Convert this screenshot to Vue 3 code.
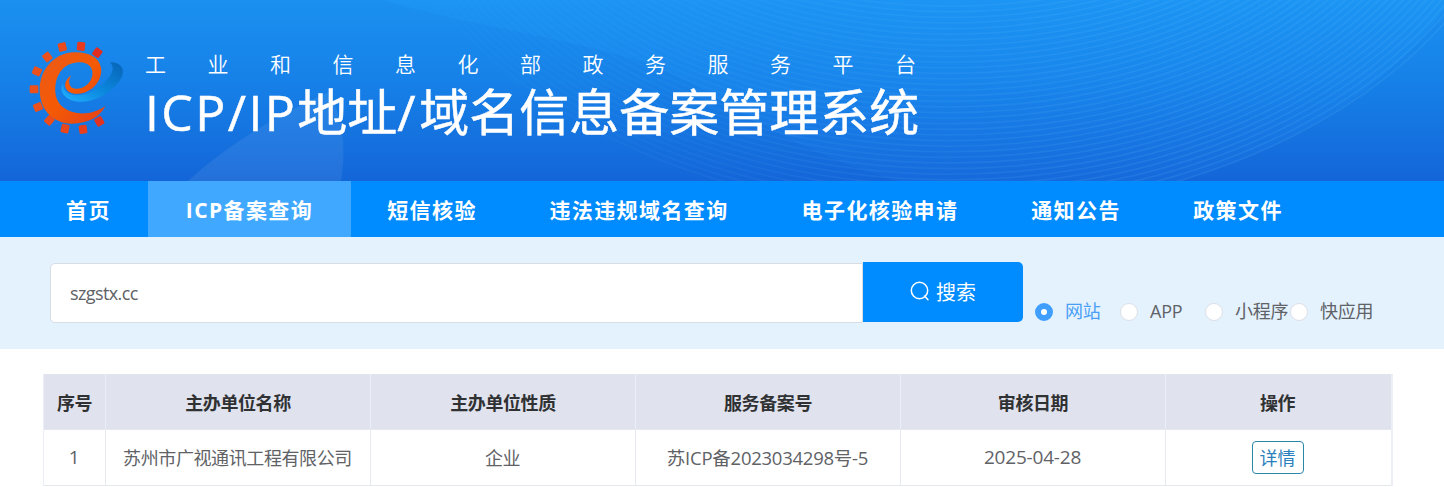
<template>
  <div class="page">
    <header class="banner">
      <svg class="banner-bg" viewBox="0 0 1444 181" preserveAspectRatio="none">
        <defs>
          <linearGradient id="fade" x1="400" y1="0" x2="1150" y2="0" gradientUnits="userSpaceOnUse">
            <stop offset="0" stop-color="#6cc4ff" stop-opacity="0.1" />
            <stop offset="1" stop-color="#6cc4ff" stop-opacity="1" />
          </linearGradient>
          <linearGradient id="glow" x1="0" y1="0" x2="0" y2="181" gradientUnits="userSpaceOnUse">
            <stop offset="0" stop-color="#1fa6ff" stop-opacity="0.22" />
            <stop offset="1" stop-color="#2a90ff" stop-opacity="0.08" />
          </linearGradient>
        </defs>
        <path d="M188 181 C226 146 270 119 329 92 C344 119 346 150 341 181 Z" fill="#fff" fill-opacity="0.07" />
        <path d="M383 0 C500 35 625 42 700 88 C757 125 819 158 898 181 H1178 C1303 145 1400 79 1450 0 Z" fill="url(#glow)" />
        <g fill="none" stroke="url(#fade)" stroke-opacity="0.13" stroke-width="1.6">
          <ellipse v-for="n in 38" :key="n" cx="950" cy="-190" :rx="588 - n * 6" :ry="409 - n * 5.6" />
        </g>
      </svg>

      <svg class="logo" viewBox="0 0 345 345">
        <defs>
          <linearGradient id="orange" x1="0" y1="0" x2="1" y2="1">
            <stop offset="0" stop-color="#ea5a1c" />
            <stop offset="0.5" stop-color="#f55a04" />
            <stop offset="1" stop-color="#e0401c" />
          </linearGradient>
          <linearGradient id="swoosh" x1="0" y1="1" x2="1" y2="0">
            <stop offset="0" stop-color="#20b0ff" />
            <stop offset="0.5" stop-color="#0a86dc" />
            <stop offset="1" stop-color="#0763b5" />
          </linearGradient>
        </defs>
        <path
          fill="url(#swoosh)"
          d="M270 97 C309 96 320 127 297 155 C267 193 224 215 180 215 C137 216 113 183 130 160 C128 180 143 196 170 196 C216 194 252 164 272 135 C281 119 280 108 270 97 Z"
        />
        <path
          fill="url(#orange)"
          d="M153 137 C125 154 130 193 174 191 C217 189 249 149 243 113 C237 77 197 64 158 67 C98 71 58 125 59 180 C60 241 99 280 155 281 C207 281 241 259 256 228 C226 249 190 256 157 246 C119 235 102 205 106 168 C110 126 137 99 174 97 C204 95 221 113 217 136 C213 161 190 178 166 176 C148 174 142 157 153 137 Z"
        />
        <rect
          v-for="(t, i) in teeth"
          :key="i"
          x="-12"
          y="-13"
          width="24"
          height="26"
          rx="4"
          :fill="t[3]"
          :transform="`translate(${t[0]} ${t[1]}) rotate(${t[2]})`"
        />
      </svg>

      <div class="titles">
        <p class="subtitle">工业和信息化部政务服务平台</p>
        <h1><span>ICP/IP</span>地址<span class="slash">/</span>域名信息备案管理系统</h1>
      </div>
    </header>

    <nav class="nav">
      <a
        v-for="(item, i) in menu"
        :key="item"
        class="nav-item"
        :class="{ active: activo === i }"
        @click="activo = i"
      >{{ item }}</a>
    </nav>

    <section class="search">
      <input v-model="keyword" type="text" class="search-input" />
      <button class="search-btn">
        <svg viewBox="0 0 20 20" width="20" height="20" fill="none" stroke="currentColor" stroke-width="1.5">
          <circle cx="9.5" cy="9.5" r="8.2" />
          <path d="M14.5 15 L18 18.7" stroke-linecap="round" />
        </svg>
        <span>搜索</span>
      </button>
      <div class="types">
        <label v-for="t in types" :key="t" class="type" :class="{ checked: type === t }" @click="type = t">
          <span class="dot"></span>
          <span>{{ t }}</span>
        </label>
      </div>
    </section>

    <table class="result">
      <colgroup>
        <col class="c-num" />
        <col class="c-main" />
        <col class="c-main" />
        <col class="c-main" />
        <col class="c-main" />
        <col />
      </colgroup>
      <thead>
        <tr>
          <th v-for="h in headers" :key="h">{{ h }}</th>
        </tr>
      </thead>
      <tbody>
        <tr v-for="(row, i) in rows" :key="row.licence">
          <td class="date">{{ i + 1 }}</td>
          <td>{{ row.name }}</td>
          <td>{{ row.kind }}</td>
          <td class="licence">{{ row.licence }}</td>
          <td class="date">{{ row.date }}</td>
          <td><button class="detail">详情</button></td>
        </tr>
      </tbody>
    </table>
  </div>
</template>

<script setup>
import { ref } from 'vue'

const menu = ['首页', 'ICP备案查询', '短信核验', '违法违规域名查询', '电子化核验申请', '通知公告', '政策文件']
const activo = ref(1)

const keyword = ref('szgstx.cc')
const types = ['网站', 'APP', '小程序', '快应用']
const type = ref('网站')

const headers = ['序号', '主办单位名称', '主办单位性质', '服务备案号', '审核日期', '操作']
const rows = ref([
  {
    name: '苏州市广视通讯工程有限公司',
    kind: '企业',
    licence: '苏ICP备2023034298号-5',
    date: '2025-04-28'
  }
])

// x, y, rotation, colour
const teeth = [
  [232, 68, 35, '#e02d22'],
  [183, 49, 6, '#e83a1c'],
  [127, 51, -14, '#ea4a1c'],
  [82, 81, -38, '#ec501c'],
  [51, 124, -65, '#ec501c'],
  [42, 178, -90, '#ec501c'],
  [54, 231, 68, '#ec501c'],
  [88, 271, 42, '#ec4c1c'],
  [135, 296, 12, '#ea461c'],
  [189, 298, -8, '#e83e1c'],
  [238, 274, -30, '#e23320']
]
</script>

<style>
body {
  background: #fff;
  overflow: hidden;
}
</style>

<style scoped>
.page {
  width: 1444px;
  height: 487px;
  overflow: hidden;
  font-family: "Open Sans", "Noto Sans CJK SC", sans-serif;
  color: #606266;
}

.banner {
  position: relative;
  display: flex;
  height: 181px;
  background: linear-gradient(#1b90f1, #1681e8 45%, #1466d8);
  overflow: hidden;
}

.banner-bg {
  position: absolute;
  left: 0;
  top: 0;
  width: 100%;
  height: 100%;
}

.logo {
  position: relative;
  width: 115px;
  height: 115px;
  margin: 30px 0 0 20px;
}

.titles {
  position: relative;
  margin: 48px 0 0 10px;
  color: #fff;
  white-space: nowrap;
}

.subtitle {
  margin: 0;
  font-family: "Noto Sans CJK SC", sans-serif;
  font-size: 21px;
  line-height: 30px;
  letter-spacing: 41.5px;
  font-weight: 350;
}

h1 {
  margin: 1px 0 0;
  font-size: 50px;
  line-height: 66px;
  font-weight: 400;
  -webkit-text-stroke: 0.5px #fff;
}

h1 span {
  letter-spacing: 2.4px;
}

h1 .slash {
  letter-spacing: 3.5px;
}

.nav {
  display: flex;
  height: 56px;
  padding-left: 29px;
  background: #008cff;
}

.nav-item {
  width: 162px;
  line-height: 58px;
  text-align: center;
  color: #fff;
  font-size: 21px;
  font-weight: 700;
  letter-spacing: 1.4px;
  white-space: nowrap;
  cursor: pointer;
}

.nav-item:nth-child(1) {
  width: 119px;
}

.nav-item:nth-child(2) {
  width: 203px;
}

.nav-item:nth-child(4) {
  width: 252px;
}

.nav-item:nth-child(5) {
  width: 230px;
}

.nav-item.active {
  background: #40a9ff;
}

.search {
  display: flex;
  height: 112px;
  box-sizing: border-box;
  padding: 25px 0 0 50px;
  background: #e4f2fe;
}

.search-input {
  width: 813px;
  height: 60px;
  margin-top: 1px;
  box-sizing: border-box;
  padding: 0 19px 1px;
  border: 1px solid #d8dce5;
  border-radius: 5px 0 0 5px;
  background: #fff;
  color: #606266;
  font-family: inherit;
  font-size: 18px;
  letter-spacing: -0.6px;
  outline: none;
}

.search-btn {
  display: flex;
  align-items: center;
  justify-content: center;
  gap: 6px;
  width: 160px;
  height: 60px;
  padding: 0 0 2px;
  border: none;
  border-radius: 0 5px 5px 0;
  background: #008cff;
  color: #fff;
  font-family: inherit;
  font-size: 20px;
  cursor: pointer;
}

.types {
  display: flex;
  margin: 36px 0 0 12px;
}

.type {
  display: flex;
  align-items: center;
  gap: 12px;
  width: 85px;
  height: 27px;
  font-size: 18px;
  letter-spacing: -0.2px;
  line-height: 24px;
  white-space: nowrap;
  cursor: pointer;
}

.type span:last-child {
  padding-bottom: 1px;
}

.dot {
  flex: none;
  width: 18px;
  height: 18px;
  box-sizing: border-box;
  border: 1px solid #dcdfe6;
  border-radius: 50%;
  background: #fff;
}

.type.checked {
  color: #4a9ff5;
}

.type.checked .dot {
  border: 6px solid #409eff;
}

.result {
  width: 1350px;
  margin: 25px 0 0 43px;
  table-layout: fixed;
  border-collapse: separate;
  border-spacing: 0;
  border-left: 1px solid #ebeef5;
  border-right: 2px solid #ebeef5;
  font-size: 18px;
  letter-spacing: -0.4px;
  text-align: center;
}

.c-num {
  width: 62px;
}

.c-main {
  width: 265px;
}

th,
td {
  height: 56px;
  box-sizing: border-box;
  padding: 0;
  border-right: 1px solid #e6e9f0;
  border-bottom: 1px solid #e4e7ed;
  white-space: nowrap;
}

td {
  padding: 0 1px 2px 0;
}

th {
  background: #e0e3ee;
  border-right-color: #ebeef5;
  color: #303133;
  font-weight: 700;
}

th:last-child,
td:last-child {
  border-right: none;
}

th:last-child,
td:last-child {
  padding: 0 2px 0 0;
}

.date {
  font-size: 19px;
  letter-spacing: -0.2px;
}

.licence {
  font-size: 18.5px;
  letter-spacing: -0.25px;
}

.detail {
  width: 52px;
  height: 33px;
  padding: 0;
  border: 1px solid #2b87a8;
  border-radius: 4px;
  background: #fff;
  color: #2a7fbd;
  font-family: inherit;
  font-size: 18px;
  line-height: 30px;
  vertical-align: middle;
  cursor: pointer;
}
</style>
